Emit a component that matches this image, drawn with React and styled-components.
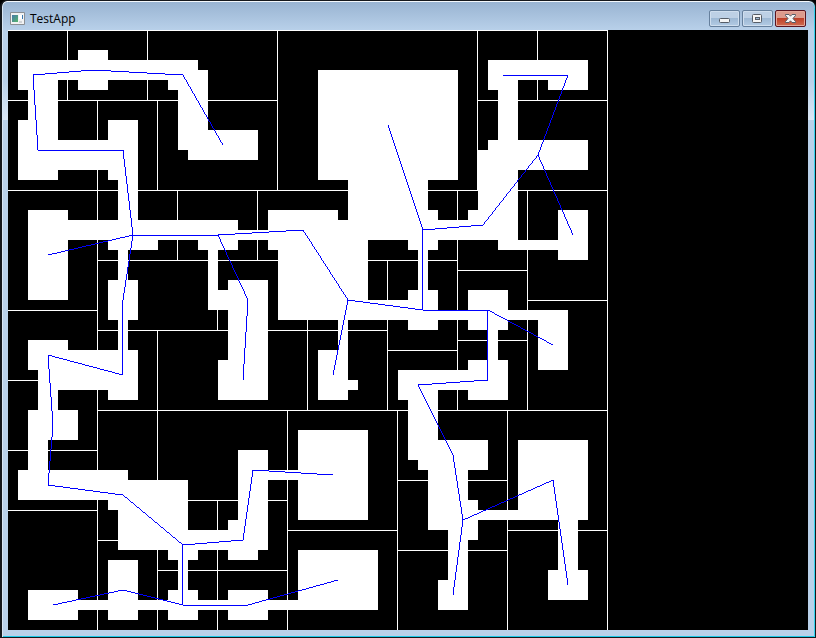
import React from "react";
import styled, { createGlobalStyle } from "styled-components";

const CELL = 10;

/* Open floor areas in cells: left, top, right, bottom */
const floors = [
  [1, 3, 5, 6], [1, 3, 19, 5], [2, 6, 5, 9], [7, 2, 10, 6], [16, 4, 20, 6],
  [17, 4, 20, 12], [18, 10, 25, 13], [1, 9, 5, 15], [1, 11, 13, 14],
  [10, 9, 13, 15], [11, 15, 13, 19], [2, 18, 6, 27], [2, 19, 23, 21],
  [10, 19, 15, 22], [19, 19, 23, 22], [23, 20, 26, 21], [20, 22, 21, 28],
  [20, 26, 22, 28], [26, 18, 33, 22], [27, 19, 36, 29], [33, 29, 34, 32],
  [31, 32, 34, 37], [34, 35, 35, 36], [22, 25, 26, 37], [21, 33, 26, 37],
  [31, 4, 45, 15], [34, 15, 42, 21], [34, 19, 51, 21], [40, 18, 43, 22],
  [41, 22, 42, 26], [40, 26, 43, 30], [36, 27, 43, 29], [43, 28, 46, 29],
  [46, 26, 50, 30], [50, 28, 53, 29], [53, 28, 56, 34], [48, 30, 49, 33],
  [46, 33, 50, 37], [39, 34, 46, 36], [39, 34, 43, 37], [40, 37, 43, 43],
  [41, 41, 48, 44], [42, 44, 46, 50], [46, 47, 47, 51], [44, 50, 46, 55],
  [43, 55, 46, 58], [47, 48, 51, 49], [51, 41, 58, 49], [55, 49, 57, 54],
  [54, 54, 58, 57], [48, 3, 58, 5], [48, 3, 51, 6], [54, 3, 58, 6],
  [49, 6, 51, 11], [48, 11, 58, 14], [47, 12, 51, 21], [46, 18, 51, 21],
  [49, 21, 55, 22], [55, 18, 58, 23], [11, 22, 12, 25], [10, 25, 13, 29],
  [11, 29, 12, 32], [10, 32, 13, 37], [2, 31, 6, 34], [3, 32, 10, 36],
  [3, 34, 5, 38], [2, 38, 7, 41], [2, 41, 4, 44], [1, 44, 12, 47],
  [10, 45, 18, 48], [11, 48, 18, 52], [16, 50, 19, 53], [17, 53, 18, 56],
  [16, 56, 19, 59], [10, 53, 13, 59], [2, 56, 7, 59], [7, 57, 29, 58],
  [18, 50, 22, 52], [23, 42, 26, 52], [22, 49, 25, 53], [26, 44, 29, 45],
  [29, 40, 36, 49], [29, 52, 37, 58], [22, 56, 26, 59],
];

/* Upright partition walls in cells: x, from, to */
const uprights = [
  [6, 0, 7], [14, 0, 7], [27, 0, 16], [47, 0, 16], [53, 0, 7], [60, 0, 60],
  [9, 7, 60], [15, 7, 16], [15, 30, 60], [17, 16, 23], [25, 16, 23],
  [21, 23, 30], [38, 23, 38], [30, 23, 38], [21, 47, 60], [28, 38, 60],
  [39, 38, 60], [50, 38, 60], [45, 16, 38], [52, 16, 38],
];

/* Level partition walls in cells: y, from, to */
const levels = [
  [0, 0, 60], [7, 0, 27], [7, 47, 60], [16, 0, 60], [23, 9, 45], [28, 0, 9],
  [30, 9, 38], [38, 9, 60], [35, 0, 9], [42, 0, 9], [48, 0, 9], [51, 9, 15],
  [47, 15, 28], [54, 15, 28], [50, 28, 39], [45, 39, 50], [52, 39, 50],
  [50, 50, 60], [24, 45, 52], [27, 52, 60], [31, 45, 52], [32, 38, 45],
];

/* Links between room centres */
const routes = [
  [[215, 115], [175, 45], [85, 40], [25, 45], [30, 120], [115, 120], [125, 205], [115, 270], [115, 345], [40, 325], [45, 395], [40, 455], [115, 465], [175, 515], [235, 510], [245, 440], [325, 445]],
  [[40, 225], [125, 205], [210, 205], [295, 200], [340, 270], [415, 280], [480, 280], [545, 315]],
  [[210, 205], [240, 270], [235, 350]],
  [[340, 270], [325, 345]],
  [[380, 95], [415, 200], [415, 280]],
  [[415, 200], [475, 195], [530, 125], [560, 45], [495, 45]],
  [[530, 125], [565, 205]],
  [[480, 280], [480, 350], [410, 355], [445, 425], [455, 490], [445, 565]],
  [[455, 490], [545, 450], [560, 555]],
  [[175, 515], [175, 575], [240, 575], [330, 550]],
  [[175, 575], [115, 560], [45, 575]],
];

/* Steps along the longer axis so that links stay one pixel thick */
function segmentPath([x0, y0], [x1, y1]) {
  const dx = x1 - x0;
  const dy = y1 - y0;
  let d = "";
  if (Math.abs(dx) > Math.abs(dy)) {
    for (let x = Math.min(x0, x1); x < Math.max(x0, x1); x++) {
      const y = Math.floor(y0 + ((x + 0.5 - x0) * dy) / dx);
      d += `M${x} ${y}h1v1h-1z`;
    }
  } else {
    for (let y = Math.min(y0, y1); y < Math.max(y0, y1); y++) {
      const x = Math.ceil(x0 + ((y + 0.5 - y0) * dx) / dy) - 1;
      d += `M${x} ${y}h1v1h-1z`;
    }
  }
  return d;
}

const linkPath = routes
  .map((r) => r.slice(1).map((p, i) => segmentPath(r[i], p)).join(""))
  .join("");

const GlobalStyle = createGlobalStyle`
  html, body, #root { height: 100%; }
  body { margin: 0; background: #000; }
`;

const Window = styled.div`
  box-sizing: border-box;
  display: flex;
  flex-direction: column;
  min-height: 100%;
  padding: 0 7px 7px 6px;
  border: 1px solid #15181c;
  border-left-width: 2px;
  border-radius: 7px 7px 0 0;
  background: linear-gradient(#98b3d1 0, #b9d1ea 30px, #b9d1ea 80px, #dbe7f5 119px, #b9d1ea 119px);
  box-shadow: inset 0 1px #f4f8fc, inset 1px 0 #d8e6f4, inset -1px 0 #35d3ee, inset 0 -1px #1cc8e8;
`;

const TitleBar = styled.header`
  display: flex;
  align-items: center;
  gap: 5px;
  height: 29px;
  padding: 6px 2px 0 1px;
  box-sizing: border-box;
`;

const Title = styled.h1`
  flex: 1;
  margin: 0;
  font: 12px/16px "Open Sans", "Noto Sans", sans-serif;
  color: #000;
`;

const Controls = styled.div`
  display: flex;
  gap: 2px;
`;

const ControlButton = styled.button`
  display: grid;
  place-items: center;
  box-sizing: border-box;
  width: 31px;
  height: 17px;
  padding: 0;
  border: 1px solid ${(p) => (p.$danger ? "#5a1420" : "#66809d")};
  border-radius: 2px;
  background: ${(p) =>
    p.$danger
      ? "linear-gradient(#dc9b8d 0 45%, #bd3c25 46%, #cf6c50)"
      : "linear-gradient(#bdd0e5 0 45%, #9cb7d3 46%, #b3cbe4)"};
  box-shadow: inset 0 0 0 1px ${(p) => (p.$danger ? "#e5a799" : "#cfdeee")};
`;

const Stage = styled.main`
  flex: 1;
  overflow: hidden;
  background: #000;
`;

const MapDrawing = styled.svg`
  display: block;
`;

const Glyph = styled.svg`
  display: block;
`;

function AppIcon() {
  return (
    <Glyph width="16" height="13" viewBox="0 0 16 13" aria-hidden="true">
      <defs>
        <linearGradient id="pane" x2="1" y2="1">
          <stop offset="0" stopColor="#4779a9" />
          <stop offset="1" stopColor="#55b56c" />
        </linearGradient>
      </defs>
      <path d="M1.500.5h14v12h-14z" fill="#f1f2f3" stroke="#8b8f94" />
      <path d="M3 3h6v7H3z" fill="url(#pane)" />
      <path d="M10 3h3v4h-3z" fill="#fff" />
      <path d="M13 3h1v4h-1z" fill="#3978b0" />
      <path d="M10 9h3v2h-3z" fill="#d0d3d6" />
    </Glyph>
  );
}

function MinimizeGlyph() {
  return (
    <Glyph width="13" height="11" viewBox="0 0 13 11" aria-hidden="true">
      <rect x="1.5" y="5.5" width="10" height="4" rx="1" fill="#f5f5f5" stroke="#565d67" />
    </Glyph>
  );
}

function MaximizeGlyph() {
  return (
    <Glyph width="13" height="11" viewBox="0 0 13 11" aria-hidden="true">
      <rect x="1.5" y="1.5" width="9" height="8" rx="1" fill="#f5f5f5" stroke="#565d67" />
      <rect x="4.5" y="4.5" width="4" height="2" fill="#9cb7d3" stroke="#565d67" />
    </Glyph>
  );
}

function CloseGlyph() {
  return (
    <Glyph width="13" height="11" viewBox="0 0 13 11" aria-hidden="true">
      <path
        d="M1.5 1.5H5l1.500 1.700L8 1.500h3.500v1L9 5.500l2.500 3v1H8L6.500 7.800 5 9.500H1.500v-1L4 5.500l-2.500-3z"
        fill="#f5f5f5"
        stroke="#565d67"
        strokeLinejoin="round"
      />
    </Glyph>
  );
}

function DungeonMap() {
  return (
    <MapDrawing width="800" height="600" viewBox="0 0 800 600" shapeRendering="crispEdges" role="img" aria-label="Room map">
      <g fill="#fff">
        {uprights.map(([x, a, b], i) => (
          <rect key={`u${i}`} x={x * CELL - 1} y={a * CELL} width="1" height={(b - a) * CELL} />
        ))}
        {levels.map(([y, a, b], i) => (
          <rect key={`l${i}`} x={a * CELL} y={y * CELL} width={(b - a) * CELL} height="1" />
        ))}
        {floors.map(([l, t, r, b], i) => (
          <rect key={`f${i}`} x={l * CELL} y={t * CELL} width={(r - l) * CELL} height={(b - t) * CELL} />
        ))}
      </g>
      <path d={linkPath} fill="#00f" />
    </MapDrawing>
  );
}

export default function App() {
  return (
    <>
      <GlobalStyle />
      <Window>
        <TitleBar>
          <AppIcon />
          <Title>TestApp</Title>
          <Controls>
            <ControlButton type="button" aria-label="Minimize"><MinimizeGlyph /></ControlButton>
            <ControlButton type="button" aria-label="Maximize"><MaximizeGlyph /></ControlButton>
            <ControlButton type="button" aria-label="Close" $danger><CloseGlyph /></ControlButton>
          </Controls>
        </TitleBar>
        <Stage>
          <DungeonMap />
        </Stage>
      </Window>
    </>
  );
}
